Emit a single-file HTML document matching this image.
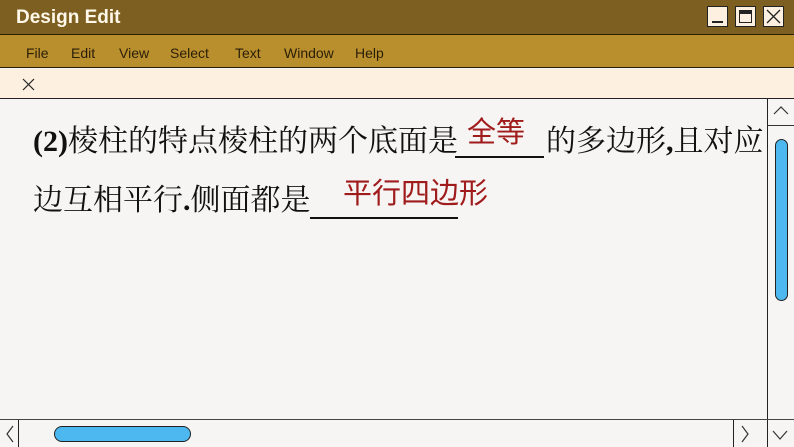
<!DOCTYPE html>
<html><head><meta charset="utf-8"><style>
*{margin:0;padding:0;box-sizing:border-box}
body{width:794px;height:447px;overflow:hidden;background:#f6f5f3;position:relative;font-family:"Liberation Sans",sans-serif}
.a{position:absolute}
.t{font-family:"Liberation Serif","Noto Serif CJK SC",serif;font-size:30px;color:#111;white-space:nowrap;line-height:1}
.r{font-family:"Liberation Sans","Noto Sans CJK SC",sans-serif;color:#a01c1c;white-space:nowrap;line-height:1}
.menu span{position:absolute;top:10px;font-size:14px;color:#2a1e08}
.btn{position:absolute;top:6px;width:21px;height:21px;background:#fdf0e0;border:1.5px solid #222}
</style></head><body>
<div class="a" style="left:0;top:0;width:794px;height:35px;background:#7e5f22;border-bottom:1px solid #2a1e08"></div>
<div class="a" style="left:16px;top:7px;font-size:19px;font-weight:bold;color:#fff8e8">Design Edit</div>
<div class="btn" style="left:707px"><div class="a" style="left:4px;top:14px;width:11px;height:2px;background:#222"></div></div>
<div class="btn" style="left:735px"><div class="a" style="left:3px;top:3px;width:13px;height:13px;border:1.5px solid #222;border-top:4px solid #222"></div></div>
<div class="btn" style="left:763px"><svg class="a" style="left:2px;top:2px" width="15" height="15"><path d="M1 1L14 14M14 1L1 14" stroke="#222" stroke-width="1.3"/></svg></div>
<div class="a menu" style="left:0;top:35px;width:794px;height:33px;background:#b98f2e;border-bottom:1.5px solid #2a1e08">
<span style="left:26px">File</span><span style="left:71px">Edit</span><span style="left:119px">View</span><span style="left:170px">Select</span><span style="left:235px">Text</span><span style="left:284px">Window</span><span style="left:355px">Help</span></div>
<div class="a" style="left:0;top:69px;width:794px;height:30px;background:#fdf0e0;border-bottom:1.5px solid #222"></div>
<svg class="a" style="left:22px;top:78px" width="13" height="13"><path d="M1 1L12 12M12 1L1 12" stroke="#222" stroke-width="1.2"/></svg>
<div class="a" style="left:767px;top:99px;width:27px;height:321px;background:#f6f5f3;border-left:1.5px solid #222"></div>
<div class="a" style="left:767px;top:125px;width:27px;height:1px;background:#333"></div>
<svg class="a" style="left:772px;top:104px" width="18" height="14"><path d="M2 10L9 3L16 10" stroke="#333" fill="none" stroke-width="1.2"/></svg>
<div class="a" style="left:775px;top:139px;width:13px;height:162px;background:#4db8f0;border:1.5px solid #222;border-radius:7px"></div>
<div class="a" style="left:0;top:419px;width:794px;height:28px;background:#f6f5f3;border-top:1.5px solid #444"></div>
<div class="a" style="left:18px;top:420px;width:1px;height:27px;background:#222"></div>
<div class="a" style="left:733px;top:420px;width:1px;height:27px;background:#222"></div>
<div class="a" style="left:767px;top:420px;width:1px;height:27px;background:#222"></div>
<svg class="a" style="left:4px;top:424px" width="12" height="20"><path d="M9 2L3 10L9 18" stroke="#333" fill="none" stroke-width="1.2"/></svg>
<svg class="a" style="left:739px;top:424px" width="12" height="20"><path d="M3 2L9 10L3 18" stroke="#333" fill="none" stroke-width="1.2"/></svg>
<svg class="a" style="left:771px;top:428px" width="20" height="14"><path d="M2 3L9 11L16 3" stroke="#333" fill="none" stroke-width="1.2"/></svg>
<div class="a" style="left:54px;top:426px;width:137px;height:16px;background:#4db8f0;border:1.5px solid #222;border-radius:8px"></div>
<div class="a t" style="left:33px;top:127px"><b>(2)</b>棱柱的特点棱柱的两个底面是</div>
<div class="a" style="left:455px;top:156px;width:89px;height:2px;background:#111"></div>
<div class="a t" style="left:546px;top:127px">的多边形<b>,</b>且对应</div>
<div class="a r" style="left:467px;top:119px;font-size:29px">全等</div>
<div class="a t" style="left:33px;top:186px">边互相平行<b>.</b>侧面都是</div>
<div class="a" style="left:310px;top:217px;width:148px;height:2px;background:#111"></div>
<div class="a r" style="left:343px;top:180px;font-size:29px">平行四边形</div>
</body></html>
